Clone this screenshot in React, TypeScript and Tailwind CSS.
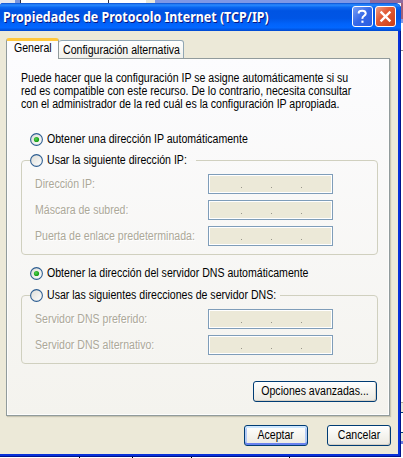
import React from "react";

const ink = "block w-max whitespace-nowrap text-[12px] leading-[13px] scale-x-[0.881]";

function Radio({ on, label }: { on?: boolean; label: string }) {
  return (
    <div className="flex h-[14px] items-center">
      <svg width="13" height="13" viewBox="0 0 13 13" className="shrink-0">
        <defs>
          <linearGradient id="face" x1="0" y1="0" x2="1" y2="1">
            <stop offset="0" stopColor="#dcdcd6" />
            <stop offset="1" stopColor="#fff" />
          </linearGradient>
          <radialGradient id="dot" cx=".4" cy=".4">
            <stop offset="0" stopColor="#55d551" />
            <stop offset="1" stopColor="#1ca01c" />
          </radialGradient>
        </defs>
        <circle cx="6.5" cy="6.5" r="5.9" fill="url(#face)" stroke="#2f5f92" strokeWidth="1.1" />
        {on && <circle cx="6.5" cy="6.5" r="2.6" fill="url(#dot)" />}
      </svg>
      <span className={`${ink} ml-[4px] origin-left`}>{label}</span>
    </div>
  );
}

function IpBox() {
  return (
    <div className="flex h-[20px] w-[125px] border border-[#7f9db9] bg-white p-px">
      <div className="flex flex-1 gap-[29px] bg-[#ece9d8] pt-[11px] pl-[31px]">
        <i className="h-px w-px bg-[#99978a]" />
        <i className="h-px w-px bg-[#99978a]" />
        <i className="h-px w-px bg-[#99978a]" />
      </div>
    </div>
  );
}

function Field({ label }: { label: string }) {
  return (
    <div className="flex h-[20px] items-center">
      <div className="w-[173px] shrink-0">
        <span className={`${ink} origin-left text-[#aca899] [text-shadow:1px_1px_0_#fff]`}>{label}</span>
      </div>
      <IpBox />
    </div>
  );
}

function Group({ gap, children }: { gap: string; children: React.ReactNode }) {
  return (
    <div className="-mt-[7px] flex">
      <div className="flex w-[357px] flex-col rounded-[4px] border border-[#d0d0bf] pl-[13px]">
        <div className={`-mt-px h-px ${gap} bg-[#f8f8f7]`} />
        {children}
      </div>
    </div>
  );
}

function Button({ label, width, primary }: { label: string; width: string; primary?: boolean }) {
  return (
    <button
      className={`flex h-[21px] ${width} items-center justify-center rounded-[3px] border border-[#003c74] bg-gradient-to-b from-white via-[#f5f4ef] to-[#ebe9e1] ${
        primary
          ? "shadow-[inset_0_2px_0_#cee7ff,inset_0_-2px_0_#6982ee,inset_2px_0_0_#b4cbf6,inset_-2px_0_0_#b4cbf6]"
          : "shadow-[inset_-1px_-1px_0_#d6d0c5]"
      }`}
    >
      <span className={`${ink} origin-center`}>{label}</span>
    </button>
  );
}

export default function App() {
  return (
    <div className="flex h-[458px] w-[403px] flex-col overflow-hidden bg-[#f6f5f1] font-['Liberation_Sans',sans-serif] text-black">
      <div className="flex h-[3px] shrink-0">
        <div className="w-[15px] bg-[#e4e6ee]" />
        <div className="w-[5px] bg-[#7b97e0]" />
        <div className="w-[88px] border-l border-[#334] bg-white" />
        <div className="w-[38px] border-l border-[#334] bg-white" />
        <div className="w-[9px] bg-[#ece9d8]" />
        <div className="w-[215px] bg-[#7f98e6]" />
        <div className="flex-1 bg-[#8f6ba0]" />
      </div>
      <div className="flex h-[454px] shrink-0">
        <div className="flex w-[401px] shrink-0 flex-col overflow-hidden rounded-tl-[3px] rounded-tr-[6px] bg-[#0831d9] shadow-[inset_-1px_-1px_0_#00138c]">
          <header className="flex h-[28px] shrink-0 items-center bg-[linear-gradient(180deg,#0a4ed0_0%,#2a8bff_7%,#0a66f0_16%,#0054e3_28%,#0055e5_55%,#0163fb_75%,#0267ff_88%,#0048cf_100%)] pl-[3px]">
            <div className="w-[348px] shrink-0">
              <h1 className="w-max origin-left scale-x-[0.922] font-['Noto_Sans',sans-serif] text-[13.5px] leading-[20px] font-bold whitespace-nowrap text-white [text-shadow:1px_1px_0_#0a1883]">
                Propiedades de Protocolo Internet (TCP/IP)
              </h1>
            </div>
            <svg width="45" height="22" viewBox="0 0 45 22" className="shrink-0">
              <defs>
                <linearGradient id="help" x1="0" y1="0" x2="1" y2="1">
                  <stop offset="0" stopColor="#7da2f5" />
                  <stop offset=".5" stopColor="#3568e8" />
                  <stop offset="1" stopColor="#2a5ce0" />
                </linearGradient>
                <linearGradient id="close" x1="0" y1="0" x2="1" y2="1">
                  <stop offset="0" stopColor="#f0a18a" />
                  <stop offset=".4" stopColor="#e25c38" />
                  <stop offset="1" stopColor="#c83c14" />
                </linearGradient>
              </defs>
              <rect x="1.5" y=".5" width="20" height="20" rx="2.5" fill="url(#help)" stroke="#fff" />
              <path d="M7.8 7.5V6.2Q8.2 4.8 11.3 4.8T14.8 7.3Q14.8 8.8 13 9.8T11.4 12.8" fill="none" stroke="#fff" strokeWidth="2" />
              <rect x="10.4" y="14.6" width="2.1" height="2.2" fill="#fff" />
              <rect x="24.5" y=".5" width="20" height="20" rx="2.5" fill="url(#close)" stroke="#fff" />
              <path d="M29.6 5.6l9.8 9.8M39.4 5.6l-9.8 9.8" stroke="#fff" strokeWidth="2.3" />
            </svg>
          </header>
          <div className="mr-[3px] flex h-[423px] shrink-0 flex-col bg-[#ece9d8] pt-[7px] pl-[6px]">
            <div className="flex h-[21px] items-end">
              <div className="z-10 flex h-[21px] w-[53px] flex-col rounded-t-[3px] border-x border-t-[3px] border-x-[#919b9c] border-t-[#ffc73c] bg-[#fcfcfe] pl-[7px]">
                <span className={`${ink} mt-px origin-left`}>General</span>
              </div>
              <div className="flex h-[19px] w-[125px] items-start rounded-t-[3px] border border-l-0 border-[#91a7b4] bg-gradient-to-b from-white to-[#f0f0ea] pt-[3px] pl-[4px]">
                <span className={`${ink} origin-left`}>Configuración alternativa</span>
              </div>
            </div>
            <main className="-mt-px flex h-[358px] w-[384px] shrink-0 flex-col border border-[#919b9c] bg-gradient-to-b from-[#fcfcfe] to-[#f4f3ee] pt-[13px] pl-[14px] shadow-[1px_1px_1px_#c8c5b2,inset_0_0_0_1px_#fdfdfc]">
              <p className={`${ink} origin-left`}>Puede hacer que la configuración IP se asigne automáticamente si su</p>
              <p className={`${ink} origin-left`}>red es compatible con este recurso. De lo contrario, necesita consultar</p>
              <p className={`${ink} origin-left`}>con el administrador de la red cuál es la configuración IP apropiada.</p>
              <div className="mt-[21px] ml-[9px]">
                <Radio on label="Obtener una dirección IP automáticamente" />
              </div>
              <div className="z-10 mt-[7px] ml-[9px]">
                <Radio label="Usar la siguiente dirección IP:" />
              </div>
              <Group gap="w-[161px]">
                <div className="flex h-[93px] flex-col gap-[6px] pt-[13px]">
                  <Field label="Dirección IP:" />
                  <Field label="Máscara de subred:" />
                  <Field label="Puerta de enlace predeterminada:" />
                </div>
              </Group>
              <div className="mt-[11px] ml-[9px]">
                <Radio on label="Obtener la dirección del servidor DNS automáticamente" />
              </div>
              <div className="z-10 mt-[8px] ml-[9px]">
                <Radio label="Usar las siguientes direcciones de servidor DNS:" />
              </div>
              <Group gap="w-[245px]">
                <div className="flex h-[67px] flex-col gap-[6px] pt-[13px]">
                  <Field label="Servidor DNS preferido:" />
                  <Field label="Servidor DNS alternativo:" />
                </div>
              </Group>
              <div className="mt-[17px] ml-[232px]">
                <Button label="Opciones avanzadas..." width="w-[124px]" />
              </div>
            </main>
            <footer className="mt-[9px] ml-[238px] flex gap-[19px]">
              <Button primary label="Aceptar" width="w-[64px]" />
              <Button label="Cancelar" width="w-[64px]" />
            </footer>
          </div>
        </div>
        <div className="flex w-[2px] shrink-0 flex-col bg-white">
          <div className="h-[16px] bg-[#a0607c]" />
          <div className="h-[4px] bg-[#7f98e6]" />
          <div className="mt-[27px] h-px bg-[#8a8a8a]" />
          <div className="mt-[351px] h-px bg-[#aca899]" />
          <div className="h-[9px] bg-[#ece9d8]" />
          <div className="h-px bg-[#003c74]" />
          <div className="mt-[19px] h-px bg-[#003c74]" />
          <div className="h-[8px] bg-[#ece9d8]" />
          <div className="h-[3px] bg-[#6f7fe0]" />
        </div>
      </div>
      <div className="flex h-px shrink-0 bg-white">
        <i className="ml-[79px] h-px w-px bg-black" />
        <i className="ml-[52px] h-px w-px bg-black" />
        <i className="ml-[58px] h-px w-px bg-black" />
        <i className="ml-[97px] h-px w-px bg-black" />
      </div>
    </div>
  );
}
